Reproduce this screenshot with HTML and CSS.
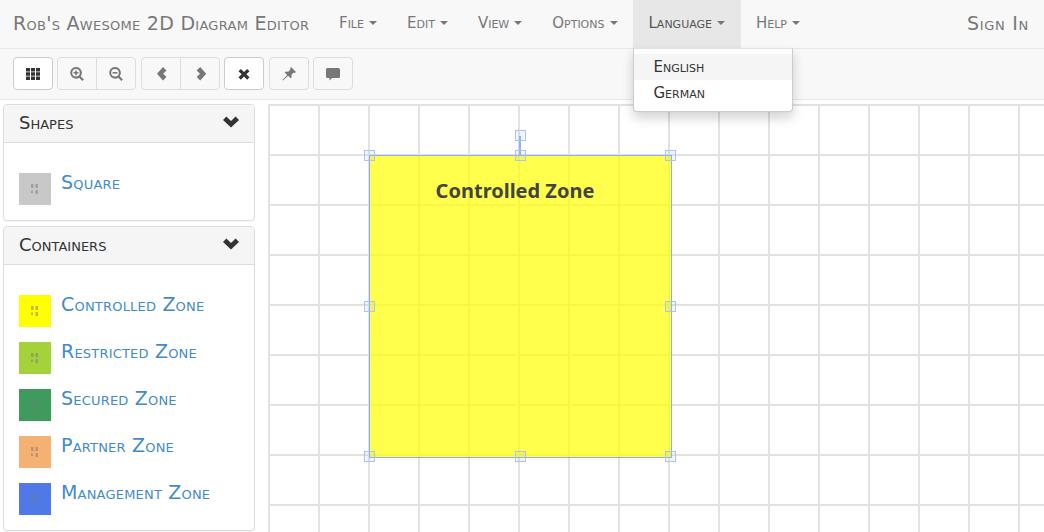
FILE: index.html
```html
<!DOCTYPE html>
<html lang="en">
<head>
  <meta charset="UTF-8" />
  <title>Rob's Awesome 2D Diagram Editor</title>
  <link rel="stylesheet" href="styles.css">
</head>
<body>
  <svg class="defs" width="0" height="0">
    <symbol id="i-th" viewBox="0 0 14 14"><path d="M0 1h4v3.500H0zM5 1h4v3.500H5zM10 1h4v3.500h-4zM0 5.300h4v3.500H0zM5 5.300h4v3.500H5zM10 5.300h4v3.500h-4zM0 9.600h4v3.500H0zM5 9.600h4v3.500H5zM10 9.600h4v3.500h-4z"/></symbol>
    <symbol id="i-zoom-in" viewBox="0 0 14 14"><path fill-rule="evenodd" d="M6 0a5.800 5.800 0 0 1 4.700 9.200l3.200 3.200-1.500 1.500-3.200-3.200A5.800 5.800 0 1 1 6 0zm0 2a3.800 3.800 0 1 0 0 7.600A3.800 3.800 0 0 0 6 2z"/><path d="M5.200 3.400h1.600V5h1.600v1.600H6.800v1.600H5.200V6.600H3.600V5h1.600z"/></symbol>
    <symbol id="i-zoom-out" viewBox="0 0 14 14"><path fill-rule="evenodd" d="M6 0a5.800 5.800 0 0 1 4.700 9.200l3.200 3.200-1.500 1.500-3.200-3.200A5.800 5.800 0 1 1 6 0zm0 2a3.800 3.800 0 1 0 0 7.600A3.800 3.800 0 0 0 6 2z"/><path d="M3.600 5h4.800v1.600H3.600z"/></symbol>
    <symbol id="i-left" viewBox="0 0 14 14"><path d="M9 0l3.500 3.400L9.200 6.700l3.300 3.300L9 13.400 3 6.700z"/></symbol>
    <symbol id="i-right" viewBox="0 0 14 14"><path d="M7.200 0L3.700 3.400 7 6.700 3.700 10l3.500 3.400 6-6.700z"/></symbol>
    <symbol id="i-remove" viewBox="-1 -1 16 16"><path d="M3.400 1.200L7 4.800l3.600-3.600 2.700 2.700-3.600 3.300 3.600 3.600-2.700 2.700L7 9.900l-3.600 3.600-2.700-2.700 3.600-3.600L.7 3.900z"/></symbol>
    <symbol id="i-pin" viewBox="0 0 14 14"><path d="M9 0l5 5-1.300.9-.9-.5-2.400 2.400.3 2.400-1.100 1.100-2.500-2.500L1 13.500l-.5-.5 4.600-5.100-2.400-2.400 1.100-1.100 2.400.3 2.400-2.400-.5-.9z"/></symbol>
    <symbol id="i-comment" viewBox="0 0 14 14"><path d="M1.500 1h11A1.500 1.500 0 0 1 14 2.500v7a1.500 1.500 0 0 1-1.500 1.500H6l-2.500 2.500V11h-2A1.500 1.500 0 0 1 0 9.500v-7A1.500 1.500 0 0 1 1.500 1z"/></symbol>
    <symbol id="i-down" viewBox="0 0 16 12"><path d="M0 4L3.400.6 8 5l4.600-4.400L16 4l-8 7.500z"/></symbol>
    <symbol id="i-grip" viewBox="0 0 7 10"><path d="M0 0h2.500v4H0zM4.500 0H7v4H4.500zM0 6.500h2V9H0zM4.500 6H7v4H4.500z"/></symbol>
  </svg>

  <nav class="navbar">
    <a class="brand">Rob's Awesome 2D Diagram Editor</a>
    <ul class="nav-menu">
      <li class="nav-item">File <span class="caret"></span></li>
      <li class="nav-item">Edit <span class="caret"></span></li>
      <li class="nav-item">View <span class="caret"></span></li>
      <li class="nav-item">Options <span class="caret"></span></li>
      <li class="nav-item open">
        Language <span class="caret"></span>
        <ul class="dropdown">
          <li class="dropdown-item hover">English</li>
          <li class="dropdown-item">German</li>
        </ul>
      </li>
      <li class="nav-item">Help <span class="caret"></span></li>
    </ul>
    <a class="sign-in">Sign In</a>
  </nav>

  <div class="toolbar">
    <button class="btn"><svg class="icon"><use href="#i-th"/></svg></button>
    <div class="btn-group">
      <button class="btn off"><svg class="icon"><use href="#i-zoom-in"/></svg></button>
      <button class="btn off"><svg class="icon"><use href="#i-zoom-out"/></svg></button>
    </div>
    <div class="btn-group">
      <button class="btn off"><svg class="icon"><use href="#i-left"/></svg></button>
      <button class="btn off"><svg class="icon"><use href="#i-right"/></svg></button>
    </div>
    <button class="btn"><svg class="icon"><use href="#i-remove"/></svg></button>
    <button class="btn off"><svg class="icon"><use href="#i-pin"/></svg></button>
    <button class="btn off"><svg class="icon"><use href="#i-comment"/></svg></button>
  </div>

  <div class="workspace">
    <aside class="sidebar">
      <section class="panel">
        <header class="panel-heading">Shapes <svg class="toggle"><use href="#i-down"/></svg></header>
        <div class="panel-body">
          <a class="shape-item"><span class="swatch grey"><svg class="grip"><use href="#i-grip"/></svg></span>Square</a>
        </div>
      </section>
      <section class="panel">
        <header class="panel-heading">Containers <svg class="toggle"><use href="#i-down"/></svg></header>
        <div class="panel-body">
          <a class="shape-item"><span class="swatch yellow"><svg class="grip"><use href="#i-grip"/></svg></span>Controlled Zone</a>
          <a class="shape-item"><span class="swatch lime"><svg class="grip"><use href="#i-grip"/></svg></span>Restricted Zone</a>
          <a class="shape-item"><span class="swatch green"><svg class="grip"><use href="#i-grip"/></svg></span>Secured Zone</a>
          <a class="shape-item"><span class="swatch orange"><svg class="grip"><use href="#i-grip"/></svg></span>Partner Zone</a>
          <a class="shape-item"><span class="swatch blue"><svg class="grip"><use href="#i-grip"/></svg></span>Management Zone</a>
        </div>
      </section>
    </aside>

    <main class="canvas">
      <div class="zone">
        <div class="zone-label">Controlled Zone</div>
        <span class="rotate-line"></span>
        <span class="handle rotate"></span>
        <span class="handle tl"></span>
        <span class="handle tc"></span>
        <span class="handle tr"></span>
        <span class="handle ml"></span>
        <span class="handle mr"></span>
        <span class="handle bl"></span>
        <span class="handle bc"></span>
        <span class="handle br"></span>
      </div>
    </main>
  </div>
</body>
</html>
```

FILE: styles.css
```css
* {
  box-sizing: border-box;
}
html, body {
  height: 532px;
  overflow: hidden;
}
body {
  margin: 0;
  background: #fff;
  color: #333;
  font-family: "DejaVu Sans", sans-serif;
  font-variant: small-caps;
}
.defs {
  position: absolute;
}
ul {
  list-style: none;
  margin: 0;
  padding: 0;
}

/* navbar */
.navbar {
  display: flex;
  align-items: center;
  height: 49px;
  background: #f8f8f8;
  border-bottom: 1px solid #e7e7e7;
  color: #777;
}
.brand {
  width: 324px;
  padding: 0 0 3px 13px;
  font-size: 19px;
  letter-spacing: .28px;
  white-space: nowrap;
}
.nav-menu {
  display: flex;
  height: 48px;
}
.nav-item {
  position: relative;
  display: flex;
  align-items: center;
  gap: 5px;
  padding: 0 15px 2px;
  font-size: 15px;
}
.nav-item.open {
  padding: 0 16px 2px;
  background: #e7e7e7;
  color: #555;
}
.caret {
  width: 0;
  height: 0;
  border-top: 4px solid #777;
  border-left: 4px solid transparent;
  border-right: 4px solid transparent;
}
.dropdown {
  position: absolute;
  top: 48px;
  left: 0;
  z-index: 10;
  width: 160px;
  padding: 5px 0;
  background: #fff;
  border: 1px solid #ccc;
  border-top-color: #e0e0e0;
  border-radius: 0 0 4px 4px;
  box-shadow: 0 6px 12px rgba(0, 0, 0, .175);
  color: #333;
}
.dropdown-item {
  height: 26px;
  line-height: 26px;
  padding-left: 20px;
}
.dropdown-item.hover {
  background: #f5f5f5;
}
.sign-in {
  margin-left: auto;
  padding: 0 15px 3px 0;
  font-size: 19px;
  letter-spacing: .7px;
}

/* toolbar */
.toolbar {
  display: flex;
  gap: 4.4px;
  height: 51px;
  padding: 8px 13px 0;
  background: #f8f8f8;
  border-bottom: 1px solid #e7e7e7;
}
.btn-group {
  display: flex;
}
.btn {
  display: flex;
  align-items: center;
  justify-content: center;
  width: 40px;
  height: 33px;
  padding: 0;
  background: #fff;
  border: 1px solid #ccc;
  border-radius: 4px;
  color: #333;
}
.btn.off {
  background: #f8f8f8;
  border-color: #ddd;
  color: #777;
}
.btn-group .btn:first-child {
  border-radius: 4px 0 0 4px;
}
.btn-group .btn:last-child {
  margin-left: -1px;
  border-radius: 0 4px 4px 0;
}
.icon {
  width: 14px;
  height: 14px;
  fill: currentColor;
}

/* sidebar */
.workspace {
  display: flex;
  height: 432px;
  padding-top: 4px;
}
.sidebar {
  flex: none;
  width: 268px;
  padding-left: 3px;
}
.panel {
  width: 252px;
  margin-bottom: 5px;
  background: #fff;
  border: 1px solid #ddd;
  border-radius: 4px;
  box-shadow: 0 1px 1px rgba(0, 0, 0, .05);
}
.panel-heading {
  display: flex;
  align-items: center;
  justify-content: space-between;
  height: 38px;
  padding: 0 15px 2px;
  background: #f5f5f5;
  border-bottom: 1px solid #ddd;
  border-radius: 3px 3px 0 0;
  font-size: 18px;
}
.toggle {
  width: 16px;
  height: 12px;
  margin-bottom: 2px;
  fill: #333;
}
.panel-body {
  display: flex;
  flex-direction: column;
  gap: 15px;
  padding: 30px 15px 15px;
}
.shape-item {
  display: flex;
  gap: 10px;
  height: 32px;
  color: #428bca;
  font-size: 19px;
  letter-spacing: .2px;
  line-height: 18px;
}
.swatch {
  display: flex;
  flex: none;
  align-items: center;
  justify-content: center;
  width: 32px;
  height: 32px;
}
.grip {
  width: 7px;
  height: 10px;
  margin-right: 2px;
  fill: rgba(120, 120, 120, .5);
}
.grey { background: #c8c8c8; }
.yellow { background: #ffff00; }
.lime { background: #a4d23b; }
.green { background: #3f9a5e; }
.orange { background: #f4b173; }
.blue { background: #5079e8; }

/* canvas */
.canvas {
  position: relative;
  flex: 1;
  overflow: hidden;
  background-color: #fff;
  background-image:
    linear-gradient(to right, #e2e2e2 2px, transparent 2px),
    linear-gradient(to bottom, #e2e2e2 2px, transparent 2px);
  background-size: 50px 50px;
}
.zone {
  position: absolute;
  top: 51px;
  left: 101px;
  width: 303px;
  height: 303px;
  background: rgba(255, 255, 0, .7);
  background-clip: padding-box;
  border: 1px solid #8fabf5;
}
.zone-label {
  padding: 23px 11px 0 0;
  color: #444;
  font-family: "Noto Sans", sans-serif;
  font-variant: normal;
  font-size: 20px;
  font-weight: 700;
  line-height: 24px;
  text-align: center;
}
.rotate-line {
  position: absolute;
  top: -20px;
  left: 149px;
  width: 2px;
  height: 20px;
  background: #8fb0f5;
}
.handle {
  position: absolute;
  width: 11px;
  height: 11px;
  background: rgba(160, 190, 250, .15);
  border: 1px solid #a9c4f5;
}
.rotate { top: -26px; left: 145px; }
.tl { top: -6px; left: -6px; }
.tc { top: -6px; left: 145px; }
.tr { top: -6px; right: -5px; }
.ml { top: 145px; left: -6px; }
.mr { top: 145px; right: -5px; }
.bl { bottom: -5px; left: -6px; }
.bc { bottom: -5px; left: 145px; }
.br { bottom: -5px; right: -5px; }
```
